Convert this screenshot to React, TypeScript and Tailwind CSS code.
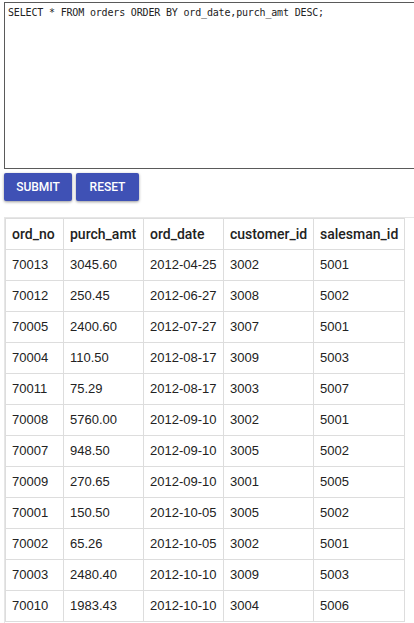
import React from "react";

const rows: string[][] = [
  ["70013", "3045.60", "2012-04-25", "3002", "5001"],
  ["70012", "250.45", "2012-06-27", "3008", "5002"],
  ["70005", "2400.60", "2012-07-27", "3007", "5001"],
  ["70004", "110.50", "2012-08-17", "3009", "5003"],
  ["70011", "75.29", "2012-08-17", "3003", "5007"],
  ["70008", "5760.00", "2012-09-10", "3002", "5001"],
  ["70007", "948.50", "2012-09-10", "3005", "5002"],
  ["70009", "270.65", "2012-09-10", "3001", "5005"],
  ["70001", "150.50", "2012-10-05", "3005", "5002"],
  ["70002", "65.26", "2012-10-05", "3002", "5001"],
  ["70003", "2480.40", "2012-10-10", "3009", "5003"],
  ["70010", "1983.43", "2012-10-10", "3004", "5006"],
];

const headers = ["ord_no", "purch_amt", "ord_date", "customer_id", "salesman_id"];
const widths = ["w-[58px]", "w-[80px]", "w-[80px]", "w-[90px]", "w-[91px]"];

export default function App() {
  return (
    <div className="w-[414px] h-[623px] overflow-hidden bg-white pl-[4px] pt-[2px]">
      <textarea
        className="block w-[420px] h-[167px] border border-[#5a5a5a] px-[3px] py-[3px] font-['DejaVu_Sans_Mono',monospace] text-[10px] tracking-[-0.17px] leading-[13px] text-[#222] resize-none outline-none"
        defaultValue="SELECT * FROM orders ORDER BY ord_date,purch_amt DESC;"
      />
      <div className="flex gap-[4px] mt-[4px] font-[Roboto,'Liberation_Sans',sans-serif]">
        <button className="h-[28px] w-[68px] rounded-[2px] bg-[#3f51b5] text-white text-[12px] font-medium uppercase shadow-[0_1px_3px_rgba(0,0,0,0.4)]">
          Submit
        </button>
        <button className="h-[28px] w-[63px] rounded-[2px] bg-[#3f51b5] text-white text-[12px] font-medium uppercase shadow-[0_1px_3px_rgba(0,0,0,0.4)]">
          Reset
        </button>
      </div>
      <div className="mt-[16px] w-[412px] h-[410px] border border-[#e6e6e6] overflow-hidden">
        <table className="table-fixed border-collapse w-[400px]">
          <thead>
            <tr>
              {headers.map((h, i) => (
                <th
                  key={h}
                  className={`${widths[i]} h-[31px] border border-[#dddddd] pl-[6px] pr-0 py-0 text-left align-middle font-[Roboto,'Liberation_Sans',sans-serif] text-[14px] font-medium text-[#222]`}
                >
                  {h}
                </th>
              ))}
            </tr>
          </thead>
          <tbody>
            {rows.map((r) => (
              <tr key={r[0]}>
                {r.map((c, i) => (
                  <td
                    key={i}
                    className="h-[31px] border border-[#dddddd] pl-[6px] pr-0 py-0 text-left align-middle font-['Liberation_Sans',Arial,sans-serif] text-[13px] text-[#222]"
                  >
                    {c}
                  </td>
                ))}
              </tr>
            ))}
          </tbody>
        </table>
      </div>
    </div>
  );
}
